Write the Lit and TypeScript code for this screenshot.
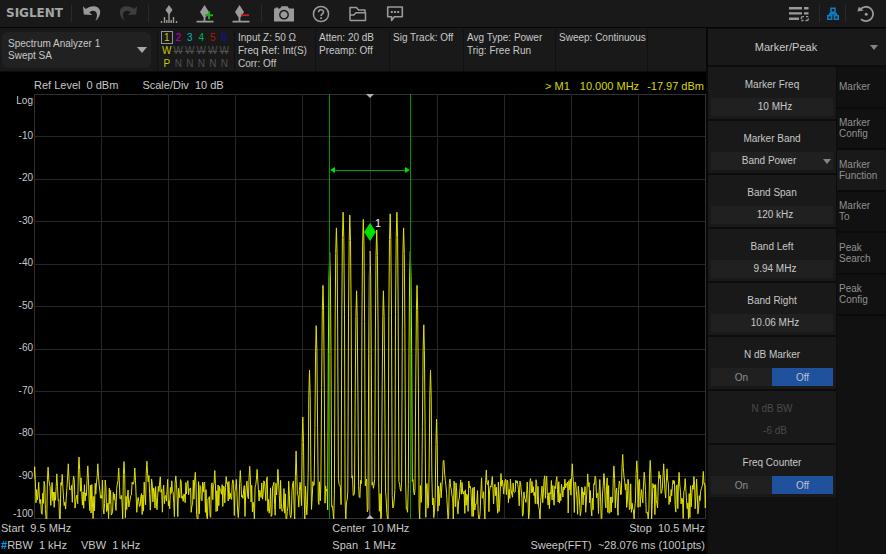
import { LitElement, html, css, svg, nothing } from "lit";
import { customElement, property, state } from "lit/decorators.js";
import { classMap } from "lit/directives/class-map.js";
import { styleMap } from "lit/directives/style-map.js";

/* ---------- trace data ---------- */

const POINTS = 1001;
const PLOT_W = 672;
const PLOT_H = 425;

// Comb lines around the carrier: [x in plot units, peak level in dB]
const COMB: [number, number][] = [
  [262, -84], [269, -76], [275.5, -65], [282.5, -54.5], [289, -45], [295.5, -37.3],
  [302.5, -31.5], [309.3, -27.8], [316, -28.5], [322.5, -46.3], [329.2, -29.5],
  [336, -37], [342.7, -32], [349.3, -46.3], [356.2, -28.2], [362.8, -27.8],
  [369.5, -31.5], [376.4, -37], [383, -45], [389.5, -54.3], [396.3, -65],
  [402.8, -76.5], [409.5, -86.3],
];

// Stand-out noise peaks: [x in plot units, level in dB]
const NOISE_PEAKS: [number, number][] = [
  [1, -87.7], [14, -87.8], [23, -89.4], [28, -89.5], [34, -87], [45, -85.4], [54, -87.5], [64, -87],
  [85, -88], [90, -86.5], [101, -88], [113, -86.4], [138, -91], [161, -89],
  [181, -88.6], [192, -90], [206, -88.6], [216, -87.6], [223, -88.3], [230, -91], [244, -88.3],
  [410, -86.2], [452, -88.5], [458, -90], [467, -89.3], [483, -91], [493, -91.3],
  [523, -90], [538, -87], [554, -89.4], [570, -89.3], [580, -87.5], [589, -84.8],
  [603, -86.3], [610, -89], [616, -86.2], [625, -88.8], [630, -87], [633, -88.2],
  [645, -89], [651, -90.5], [660, -90], [669, -88.8],
];

function buildTrace(): string {
  let seed = 20117;
  const random = () => {
    seed = (seed * 1664525 + 1013904223) % 4294967296;
    return seed / 4294967296;
  };
  const step = PLOT_W / (POINTS - 1);
  const level: number[] = [];
  let prev = 0.5;
  for (let i = 0; i < POINTS; i++) {
    const u = random();
    prev = prev * 0.15 + u * 0.85;
    level.push(-92.8 + 8 * Math.log10(-Math.log(1 - prev * 0.93) + 0.04));
  }
  const rise = (x: number, top: number, falls: number[]) => {
    const c = Math.round(x / step);
    falls.forEach((fall, n) => {
      for (const i of [c - n, c + n]) {
        if (i >= 0 && i < POINTS) level[i] = Math.max(level[i], top - fall);
      }
    });
  };
  NOISE_PEAKS.forEach(([x, top]) => rise(x, top, [0, 3]));
  COMB.forEach(([x, top]) => rise(x, top, [0, 6, 24]));
  return level
    .map((db, i) => `${(i * step).toFixed(1)},${Math.min(PLOT_H, (-db / 100) * PLOT_H).toFixed(1)}`)
    .join(" ");
}

const TRACE = buildTrace();

/* ---------- icons ---------- */

const icon = (w: number, h: number, body: unknown) =>
  html`<svg width=${w} height=${h} viewBox="0 0 ${w} ${h}" aria-hidden="true">${body}</svg>`;

const arrowBack = svg`<path d="M0 1.2 2.8 4.1C7 .2 15.6-.2 17 5.6c.8 4-1.400 8-4.700 10.400C14 12.600 14.800 8.600 12.500 6.600 10.500 5 8.300 5.500 6.300 7.400L9.400 10 .8 9.600Z" fill="currentColor"/>`;

const ICONS = {
  undo: icon(18, 17, arrowBack),
  redo: icon(18, 17, svg`<g transform="translate(18 0) scale(-1 1)">${arrowBack}</g>`),
  peak: icon(18, 18, svg`<path d="M9 0 12.500 5 9 10 5.500 5Z" fill="currentColor"/><path d="M9 9v9M1.500 16v2M4.500 12v6M13.500 12v6M16.500 16v2M6.800 15v3M11.200 15v3" stroke="currentColor" stroke-width="1.400"/>`),
  add: icon(18, 18, svg`<path d="M8.500 0 13 7 8.500 14 4 7Z" fill="currentColor"/><path d="M8.500 13v3M.5 16.600h17" stroke="currentColor" stroke-width="1.800"/><path d="M13 6.200v8M9 10.200h8" stroke="#22a822" stroke-width="2"/>`),
  remove: icon(18, 18, svg`<path d="M7.500 0 12 7 7.500 14 3 7Z" fill="currentColor"/><path d="M7.500 13v3M.5 16.600h17" stroke="currentColor" stroke-width="1.800"/><path d="M9 10.200h8" stroke="#c02020" stroke-width="1.800"/>`),
  camera: icon(20, 16, svg`<path fill-rule="evenodd" d="M0 2.500h1.500V1.600H4v.9h2.200L7.500.3h6L15 2.500h5V15.600H0ZM10 3.800a4.900 4.900 0 1 0 .01 0ZM10 5.200a3.500 3.500 0 1 1-.01 0Z" fill="currentColor"/>`),
  help: icon(18, 18, svg`<circle cx="9" cy="9" r="7.600" fill="none" stroke="currentColor" stroke-width="1.500"/><path d="M6.600 7.200C6.600 3.800 11.500 4 11.500 7c0 1.800-2.400 1.900-2.400 4" fill="none" stroke="currentColor" stroke-width="1.600"/><path d="M8.200 12.200h1.700v1.700H8.200z" fill="currentColor"/>`),
  folder: icon(18, 16, svg`<path d="M1 14.400V1.500h6.500L9.500 4H16v2.500M1 14.400h15.500V6.700H7L4.800 9H1.500" fill="none" stroke="currentColor" stroke-width="1.500" stroke-linejoin="round"/>`),
  chat: icon(18, 16, svg`<path d="M1.700 1h14.600v9.800H8.400L5.600 14.400V10.800H1.700Z" fill="none" stroke="currentColor" stroke-width="1.600" stroke-linejoin="round"/><path d="M4.800 5h2v2h-2zM8 5h2v2H8zM11.200 5h2v2h-2z" fill="currentColor"/>`),
  list: icon(20, 16, svg`<path d="M0 2.200h13M0 7.400h13M0 12.700h10M15 2.200h4.500M15 7.400h4.500" stroke="currentColor" stroke-width="2.400"/><path d="M15 10.700h-1.200q-1.600 0-1.600 1.600v.6M16.500 14.500h1.200q1.600 0 1.600-1.600v-.6M17 10.700h2.300M12.200 14.500h2.300" fill="none" stroke="currentColor" stroke-width="1.300"/>`),
  network: icon(12, 14, svg`<path d="M4 1.200h4v4H4zM.8 8.700h3.800v3.600H.8zM7.400 8.700h3.800v3.600H7.400zM6 5.200v1.700M2.700 8.700V6.900h6.600v1.800" fill="none" stroke="currentColor" stroke-width="1.600"/>`),
  reset: icon(18, 18, svg`<path d="M3.200 4.600A7.200 7.200 0 1 1 4 14.200" fill="none" stroke="currentColor" stroke-width="1.800"/><path d="M.4 6.400 1.800 1.800 6.600 5.600Z" fill="currentColor"/><circle cx="9.200" cy="9.200" r="1.500" fill="currentColor"/>`),
};

const base = css`
  * { box-sizing: border-box; }
  button, input, select { font: inherit; color: inherit; border: 0; margin: 0; padding: 0; background: none; border-radius: 0; }
  svg { display: block; }
`;

/* ---------- toolbar ---------- */

@customElement("tool-bar")
class ToolBar extends LitElement {
  static styles = [base, css`
    :host { display: flex; height: 28px; background: #191919; border-bottom: 1px solid #050505; color: #9a9a98; }
    .logo { width: 71px; padding-left: 6px; font: bold 12px/27px "DejaVu Sans", sans-serif; color: #a4a5a6; }
    .group { display: flex; padding: 0 2px; }
    .sep { width: 1px; margin: 5px 0; background: #2a2a2a; }
    .tool { width: 36px; display: grid; place-items: center; }
    .wide { padding-left: 3px; }
    .wide .tool { width: 37px; }
    .dim { color: #3c3f3e; }
    .spacer { flex: 1; }
    .end { width: 40px; }
    .net { width: 25px; color: #0a7fc4; }
  `];

  private tool(label: string, glyph: unknown, extra = "") {
    return html`<button class="tool ${extra}" aria-label=${label}>${glyph}</button>`;
  }

  render() {
    return html`
      <span class="logo">SIGLENT</span>
      <i class="sep"></i>
      <div class="group">${this.tool("Undo", ICONS.undo)}${this.tool("Redo", ICONS.redo, "dim")}</div>
      <i class="sep"></i>
      <div class="group">
        ${this.tool("Peak search", ICONS.peak)}${this.tool("Add marker", ICONS.add)}${this.tool("Remove marker", ICONS.remove)}
      </div>
      <i class="sep"></i>
      <div class="group wide">
        ${this.tool("Screenshot", ICONS.camera)}${this.tool("Help", ICONS.help)}${this.tool("Files", ICONS.folder)}${this.tool("Messages", ICONS.chat)}
      </div>
      <span class="spacer"></span>
      ${this.tool("Task list", ICONS.list, "end")}
      <i class="sep"></i>
      ${this.tool("Network", ICONS.network, "net")}
      <i class="sep"></i>
      ${this.tool("Preset", ICONS.reset, "end")}
    `;
  }
}

/* ---------- measurement settings strip ---------- */

@customElement("status-strip")
class StatusStrip extends LitElement {
  static styles = [base, css`
    :host { display: flex; height: 44px; padding-top: 2px; background: #191919; font-size: 10px; line-height: 13px; color: #c8c8c8; border-bottom: 1px solid #0c0c0c; }
    .mode { display: flex; align-items: center; justify-content: space-between; width: 149px; margin: 2px 6px 3px 2px; padding: 0 4px 0 6px; background: #212121; border-radius: 6px; text-align: left; line-height: 12px; }
    .caret { border: 5px solid transparent; border-top: 6px solid #a8a8a8; border-bottom: 0; }
    .cell { width: 74px; padding: 1px 0 0 3px; border-left: 1px solid #101010; white-space: nowrap; }
    .traces { width: 77px; }
    .input { width: 81px; }
    .wide { width: 92px; }
    .rest { flex: 1; }
    table { border-collapse: collapse; table-layout: fixed; width: 69px; }
    th, td { padding: 0; font-weight: normal; text-align: center; height: 13px; color: #505050; }
    .off { text-decoration: line-through; }
    .on { color: #c8c800; }
    .current { outline: 1px solid #8a93a8; outline-offset: -1px; }
    .t1 { color: #c8c800; }
    .t2 { color: #c000c0; }
    .t3 { color: #00b8c0; }
    .t4 { color: #00b850; }
    .t5 { color: #b81010; }
    .t6 { color: #1010b8; }
  `];

  render() {
    const traces = [1, 2, 3, 4, 5, 6];
    return html`
      <button class="mode"><span>Spectrum Analyzer 1<br />Swept SA</span><i class="caret"></i></button>
      <div class="cell traces">
        <table>
          <tr>${traces.map((n) => html`<th scope="col" class="t${n} ${n === 1 ? "current" : ""}">${n}</th>`)}</tr>
          <tr>${traces.map((n) => html`<td class=${n === 1 ? "on" : "off"}>W</td>`)}</tr>
          <tr>${traces.map((n) => html`<td class=${n === 1 ? "on" : ""}>${n === 1 ? "P" : "N"}</td>`)}</tr>
        </table>
      </div>
      <div class="cell input">Input Z: 50 Ω<br />Freq Ref: Int(S)<br />Corr: Off</div>
      <div class="cell">Atten: 20 dB<br />Preamp: Off</div>
      <div class="cell">Sig Track: Off</div>
      <div class="cell wide">Avg Type: Power<br />Trig: Free Run</div>
      <div class="cell wide">Sweep: Continuous</div>
      <div class="cell rest"></div>
    `;
  }
}

/* ---------- spectrum plot ---------- */

@customElement("spectrum-plot")
class SpectrumPlot extends LitElement {
  static styles = [base, css`
    :host { display: flex; flex-direction: column; flex: 1; background: #000; color: #c8c8c8; font-size: 11px; }
    .head { display: flex; height: 22px; padding: 0 2px 0 34px; line-height: 26px; white-space: pre; gap: 24px; }
    .readout { margin-left: auto; display: flex; gap: 8px; line-height: 28px; color: #d8d800; }
    .readout .rel { margin-right: 2px; }
    .body { flex: 1; display: flex; min-height: 300px; }
    .axis { position: relative; width: 34px; font-size: 10px; line-height: 11px; }
    .tick { position: absolute; right: 1px; transform: translateY(-7px); }
    .tick.first { transform: translateY(1px); }
    .tick.last { transform: translateY(-11px); }
    .plot { position: relative; flex: 1; overflow: hidden; }
    .chart { position: absolute; inset: 0; width: 100%; height: 100%; }
    .chart * { vector-effect: non-scaling-stroke; }
    .grid { stroke: #262626; stroke-width: 1; shape-rendering: crispEdges; }
    .edge { stroke: #303030; }
    .trace { fill: none; stroke: #e0e000; stroke-width: 1; stroke-linejoin: bevel; }
    .band { stroke: #009800; stroke-width: 1; shape-rendering: crispEdges; }
    .carrier { stroke: #555; stroke-width: 1; shape-rendering: crispEdges; }
    .span { position: absolute; left: 44%; right: 44%; top: 18%; height: 7px; margin-top: -4px; display: flex; align-items: center; color: #00e000; }
    .rule { flex: 1; height: 1px; background: #00a000; }
    .arrow { border: 3px solid transparent; border-right: 5px solid; border-left: 0; }
    .arrow.right { transform: scaleX(-1); }
    .marker { position: absolute; left: 50%; top: 32%; margin: -7px 0 0 -6px; }
    .tag { position: absolute; left: 50%; top: 30%; margin: -5px 0 0 5px; line-height: 12px; color: #f0f0f0; }
    .pin { position: absolute; left: 50%; top: 0; margin-left: -4px; border: 4px solid transparent; border-top-color: #b0b0b0; border-bottom: 0; }
    .pin.low { top: auto; bottom: 0; transform: scaleY(-1); }
    .foot { display: grid; grid-template-columns: 47% 1fr auto; padding: 1px 1px 0 0; line-height: 17px; white-space: pre; }
    .foot span { padding-left: 1px; }
    .foot .end { text-align: right; padding: 0; }
    .foot .video { padding-left: 14px; }
    .hash { color: #00a0e8; }
  `];

  render() {
    const lines = Array.from({ length: 11 }, (_, i) => i);
    return html`
      <div class="head">
        <span>Ref Level  0 dBm</span><span>Scale/Div  10 dB</span>
        <div class="readout"><span class="rel">&gt; M1</span><span>10.000 MHz</span><span>-17.97 dBm</span></div>
      </div>
      <div class="body">
        <div class="axis">
          ${lines.map((i) => html`<span
            class=${classMap({ tick: true, first: i === 0, last: i === 10 })}
            style=${styleMap({ top: `${i * 10}%` })}>${i === 0 ? "Log" : -i * 10}</span>`)}
        </div>
        <div class="plot">
          <svg class="chart" viewBox="0 0 ${PLOT_W} ${PLOT_H}" preserveAspectRatio="none" role="img" aria-label="Spectrum trace">
            ${lines.map((i) => {
              const x = Math.min(PLOT_W - 0.5, Math.round(i * 67.1) + 0.5);
              const y = Math.min(PLOT_H - 0.5, Math.floor(i * 42.5) + 0.5);
              const cls = i % 10 === 0 ? "grid edge" : "grid";
              return svg`<line class=${cls} x1=${x} x2=${x} y1="0" y2=${PLOT_H} /><line class=${cls} x1="0" x2=${PLOT_W} y1=${y} y2=${y} />`;
            })}
            <polyline class="trace" points=${TRACE} />
            <line class="carrier" x1="335.5" x2="335.5" y1="158" y2="425" />
            <line class="band" x1="295.5" x2="295.5" y1="0" y2="425" />
            <line class="band" x1="376.5" x2="376.5" y1="0" y2="425" />
          </svg>
          <div class="span"><i class="arrow"></i><i class="rule"></i><i class="arrow right"></i></div>
          <svg class="marker" width="12" height="18" viewBox="0 0 12 18"><path d="M6 0 12 9 6 18 0 9Z" fill="#00e000" /></svg>
          <span class="tag">1</span>
          <i class="pin"></i><i class="pin low"></i>
        </div>
      </div>
      <div class="foot">
        <span>Start  9.5 MHz</span><span>Center  10 MHz</span><span class="end">Stop  10.5 MHz</span>
        <span><b class="hash">#</b>RBW  1 kHz<span class="video">VBW  1 kHz</span></span><span>Span  1 MHz</span><span class="end">Sweep(FFT)  ~28.076 ms (1001pts)</span>
      </div>
    `;
  }
}

/* ---------- side menu ---------- */

type Item = { label: string; value: string; kind: "text" | "select" | "switch"; disabled?: boolean };

const ITEMS: Item[] = [
  { label: "Marker Freq", value: "10 MHz", kind: "text" },
  { label: "Marker Band", value: "Band Power", kind: "select" },
  { label: "Band Span", value: "120 kHz", kind: "text" },
  { label: "Band Left", value: "9.94 MHz", kind: "text" },
  { label: "Band Right", value: "10.06 MHz", kind: "text" },
  { label: "N dB Marker", value: "Off", kind: "switch" },
  { label: "N dB BW", value: "-6 dB", kind: "text", disabled: true },
  { label: "Freq Counter", value: "Off", kind: "switch" },
];

const TABS = ["Marker", "Marker\nConfig", "Marker\nFunction", "Marker\nTo", "Peak\nSearch", "Peak\nConfig"];

@customElement("menu-item")
class MenuItem extends LitElement {
  @property({ attribute: false }) item!: Item;

  static styles = [base, css`
    :host { display: block; height: 52px; padding: 0 3px; background: #191919; text-align: center; }
    .field { display: block; width: 100%; }
    .group { border: 0; margin: 0; padding: 0; min-width: 0; }
    .name { display: block; width: 100%; height: 31px; line-height: 35px; padding: 0; }
    .box { display: block; width: 100%; height: 18px; line-height: 18px; padding-left: 6px; background: #202020; text-align: center; }
    .pick { position: relative; display: block; }
    select.box { appearance: none; text-align-last: center; padding: 0 6px 0 0; }
    .caret { position: absolute; right: 2px; top: 7px; border: 4px solid transparent; border-top: 5px solid #858585; border-bottom: 0; }
    .disabled { color: #4a4a4a; }
    .disabled .box { background: none; color: inherit; }
    .switch { display: flex; height: 18px; line-height: 19px; background: #202020; }
    .choice { flex: 1; height: 18px; color: #8e8e8e; }
    .choice input { position: absolute; opacity: 0; }
    .choice:has(input:checked) { background: #1f519d; color: #b9c2d0; }
  `];

  render() {
    const { label, value, kind, disabled } = this.item;
    if (kind === "switch") {
      return html`<fieldset class="group">
        <legend class="name">${label}</legend>
        <div class="switch">
          ${["On", "Off"].map((v) => html`<label class="choice"><input type="radio" name="state" .checked=${v === value} />${v}</label>`)}
        </div>
      </fieldset>`;
    }
    return html`<label class=${classMap({ field: true, disabled: !!disabled })}>
      <span class="name">${label}</span>
      ${kind === "select"
        ? html`<span class="pick"><select class="box"><option>${value}</option></select><i class="caret"></i></span>`
        : html`<input class="box" type="text" .value=${value} ?disabled=${!!disabled} />`}
    </label>`;
  }
}

@customElement("side-menu")
class SideMenu extends LitElement {
  @state() private active = 2;

  static styles = [base, css`
    :host { display: flex; flex-direction: column; background: #0c0c0c; color: #c8c8c8; font-size: 10px; border-left: 2px solid #080808; padding-top: 1px; }
    .title { display: flex; align-items: center; height: 36px; width: 100%; background: #191919; font-size: 11px; }
    .title span { flex: 1; padding-right: 6px; }
    .caret { margin-right: 8px; border: 4px solid transparent; border-top: 5px solid #858585; border-bottom: 0; }
    .columns { flex: 1; display: grid; grid-template-columns: 1fr 49px; gap: 1px; padding-top: 2px; }
    .items { display: flex; flex-direction: column; gap: 2px; background: #0c0c0c; }
    .fill { flex: 1; background: #111; margin-top: -2px; }
    .side { background: #111; }
    .tabs { display: grid; grid-auto-rows: 1fr; height: 249px; }
    .tab { width: 100%; border-bottom: 2px solid #0b0b0b; text-align: left; white-space: pre-line; line-height: 11px; padding-left: 2px; color: #909090; }
    .tab.active { background: #191919; }
  `];

  render() {
    return html`
      <button class="title"><span>Marker/Peak</span><i class="caret"></i></button>
      <div class="columns">
        <div class="items">
          ${ITEMS.map((item) => html`<menu-item .item=${item}></menu-item>`)}
          <div class="fill"></div>
        </div>
        <nav class="side">
          <div class="tabs">
            ${TABS.map((tab, i) => html`<button
              class=${classMap({ tab: true, active: i === this.active })}
              aria-current=${i === this.active ? "page" : nothing}
              @click=${() => (this.active = i)}>${tab}</button>`)}
          </div>
        </nav>
      </div>
    `;
  }
}

/* ---------- page ---------- */

@customElement("app-root")
class AppRoot extends LitElement {
  static styles = [base, css`
    :host { display: flex; flex-direction: column; min-height: 100vh; background: #000; font-family: "Liberation Sans", Arial, sans-serif; }
    .main { flex: 1; display: grid; grid-template-columns: 1fr 180px; }
    .screen { display: flex; flex-direction: column; min-width: 0; }
  `];

  render() {
    return html`
      <tool-bar></tool-bar>
      <div class="main">
        <div class="screen">
          <status-strip></status-strip>
          <spectrum-plot></spectrum-plot>
        </div>
        <side-menu></side-menu>
      </div>
    `;
  }
}
